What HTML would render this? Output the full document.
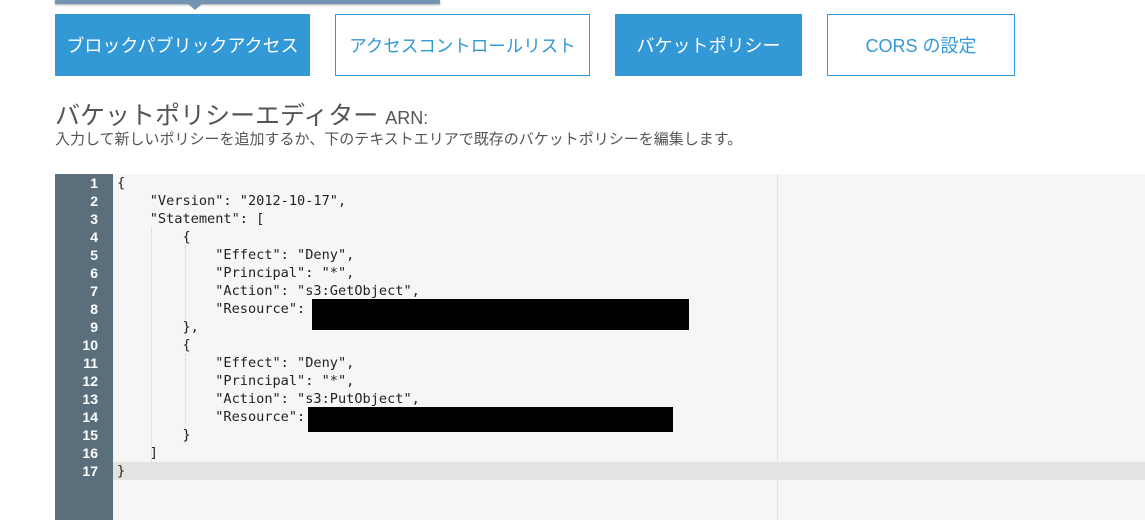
<!DOCTYPE html>
<html><head><meta charset="utf-8"><style>
body{margin:0;width:1145px;height:520px;background:#fff;position:relative;overflow:hidden;font-family:"Liberation Sans","Noto Sans CJK JP",sans-serif}
.bar{position:absolute;left:55px;top:0;width:385px;height:4px;background:#7393b3;box-shadow:0 1px 2px #aaa}
.tri{position:absolute;left:188px;top:4px;width:0;height:0;border-left:7px solid transparent;border-right:7px solid transparent;border-top:6px solid #7393b3}
.btn{position:absolute;top:14px;height:62px;box-sizing:border-box;display:flex;align-items:center;justify-content:center;font-size:18px}
.f{background:#3399d6;color:#fff}
.o{border:1px solid #3399d6;color:#3399d6;background:#fff}
h1{position:absolute;left:55px;top:96px;margin:0;font-weight:normal;font-size:25px;color:#555;white-space:nowrap}
h1 span{font-size:18px}
.sub{position:absolute;left:55px;top:128px;font-size:15px;color:#555;white-space:nowrap}
.ed{position:absolute;left:55px;top:174px;width:1090px;height:346px;background:#f5f7f6}
.gut{position:absolute;left:0;top:0;width:58px;height:346px;background:#5a6f7b}
.ln{position:absolute;left:0;width:43px;text-align:right;color:#fff;font:bold 14px "Liberation Sans",sans-serif;line-height:18px}
.code{position:absolute;left:62px;top:0;font:13.6px "DejaVu Sans Mono","Liberation Mono",monospace;line-height:18px;color:#222;white-space:pre}
.act{position:absolute;left:58px;top:288px;width:1032px;height:18px;background:#e3e4e2}
.pm{position:absolute;left:722px;top:0;width:1px;height:346px;background:#e2e4e3}
.red{position:absolute;background:#000}
.guide{position:absolute;border-left:1px dotted #ccc}
</style></head><body>
<div class="bar"></div><div class="tri"></div>
<div class="btn f" style="left:55px;width:255px">ブロックパブリックアクセス</div>
<div class="btn o" style="left:335px;width:255px;font-size:17.5px">アクセスコントロールリスト</div>
<div class="btn f" style="left:615px;width:187px">バケットポリシー</div>
<div class="btn o" style="left:827px;width:188px">CORS の設定</div>
<h1>バケットポリシーエディター <span>ARN:</span></h1>
<div class="sub">入力して新しいポリシーを追加するか、下のテキストエリアで既存のバケットポリシーを編集します。</div>
<div class="ed">
<div class="act"></div><div class="pm"></div>
<div class="gut">
<div class="ln" style="top:0">1<br>2<br>3<br>4<br>5<br>6<br>7<br>8<br>9<br>10<br>11<br>12<br>13<br>14<br>15<br>16<br>17</div>
</div>
<div class="guide" style="left:96px;top:54px;height:234px"></div>
<div class="guide" style="left:130px;top:72px;height:90px"></div>
<div class="guide" style="left:130px;top:180px;height:90px"></div>
<div class="code">{
    "Version": "2012-10-17",
    "Statement": [
        {
            "Effect": "Deny",
            "Principal": "*",
            "Action": "s3:GetObject",
            "Resource":
        },
        {
            "Effect": "Deny",
            "Principal": "*",
            "Action": "s3:PutObject",
            "Resource":
        }
    ]
}</div>
<div class="red" style="left:257px;top:125px;width:377px;height:31px"></div>
<div class="red" style="left:253px;top:233px;width:365px;height:25px"></div>
</div>
</body></html>
